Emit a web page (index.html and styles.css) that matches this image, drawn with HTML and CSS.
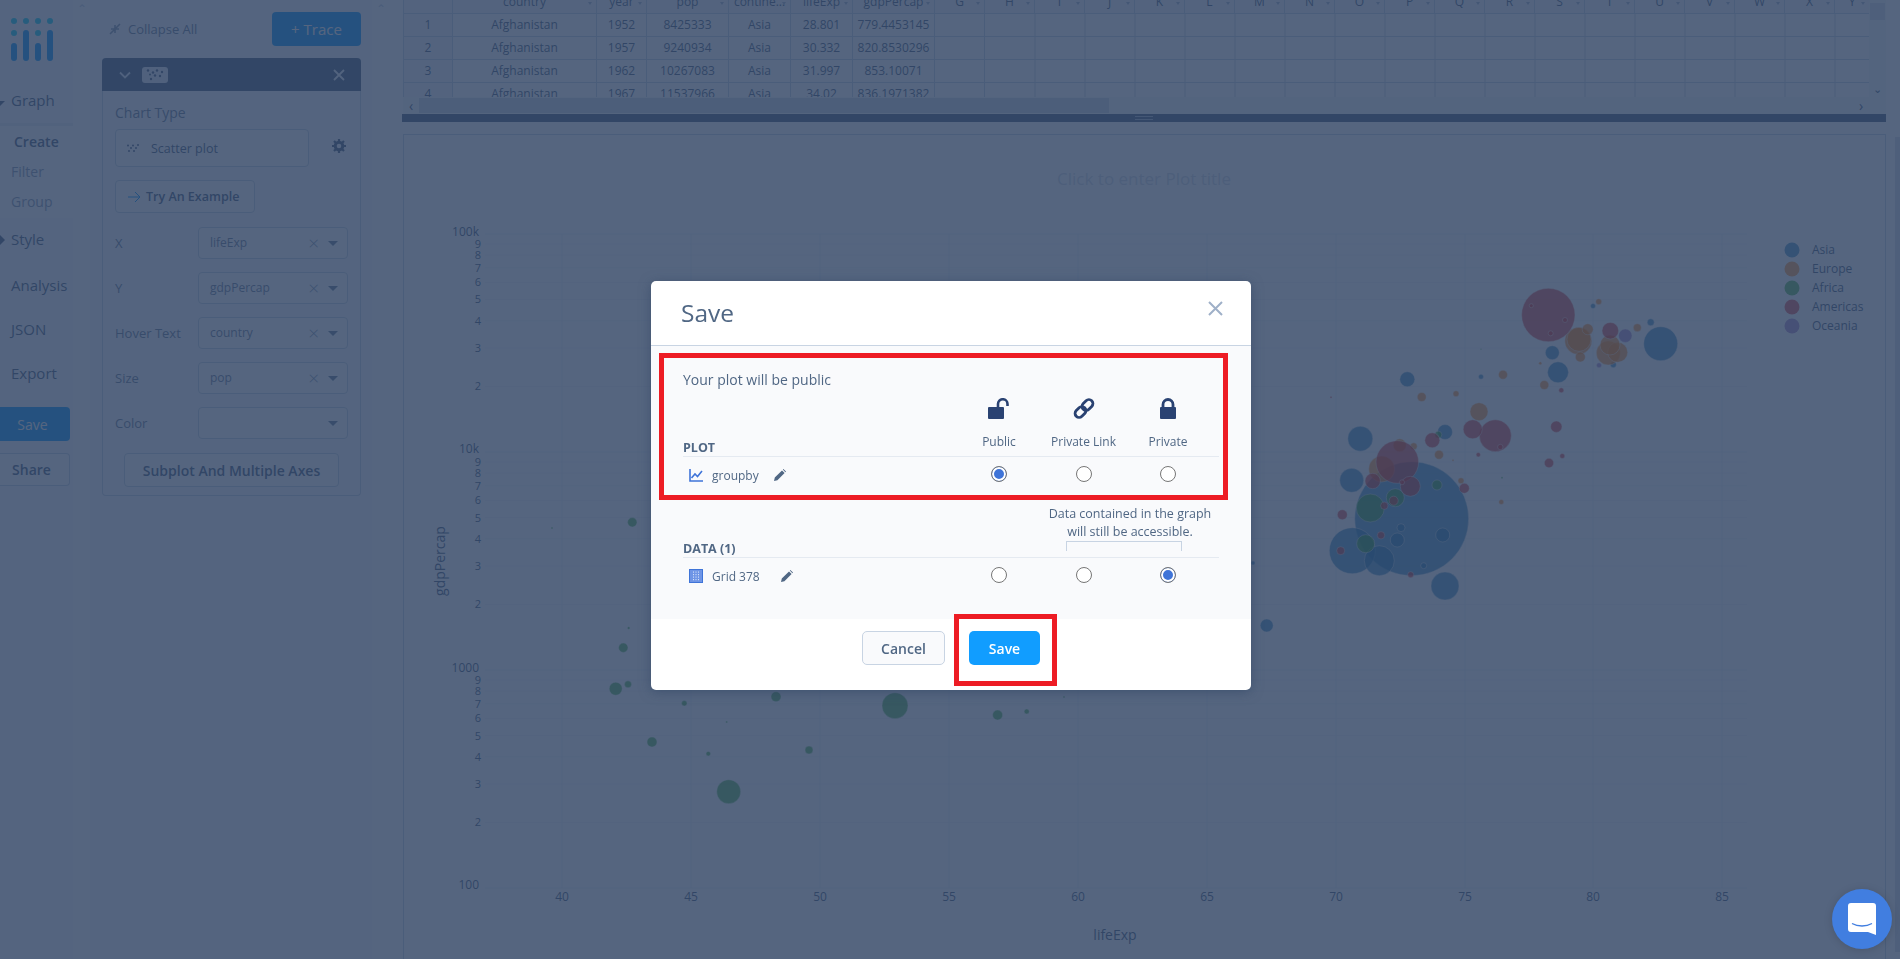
FILE: index.html
```html
<!DOCTYPE html>
<html lang="en">
  <head>
    <meta charset="UTF-8">
    <title>Chart Studio - Save</title>
    <link rel="stylesheet" href="styles.css">
  </head>
  <body>
    <div class="app">
      <nav class="nav">
        <svg class="logo" width="48" height="46" viewBox="0 0 48 46">
          <g fill="#19d3f3">
            <circle cx="4" cy="4" r="3"/><circle cx="16" cy="4" r="3"/><circle cx="28" cy="4" r="3"/><circle cx="40" cy="4" r="3"/>
            <circle cx="4" cy="16" r="3"/><circle cx="28" cy="16" r="3"/>
          </g>
          <g fill="#119dff">
            <rect x="1" y="26" width="6" height="18" rx="3"/><rect x="13" y="13" width="6" height="31" rx="3"/>
            <rect x="25" y="26" width="6" height="18" rx="3"/><rect x="37" y="13" width="6" height="31" rx="3"/>
          </g>
        </svg>
        <div class="nav-item nav-graph"><span class="caret-down"></span>Graph</div>
        <div class="nav-sub">
          <div class="nav-sub-item active">Create</div>
          <div class="nav-sub-item">Filter</div>
          <div class="nav-sub-item">Group</div>
        </div>
        <div class="nav-item nav-style"><span class="caret-right"></span>Style</div>
        <div class="nav-item nav-analysis">Analysis</div>
        <div class="nav-item">JSON</div>
        <div class="nav-item">Export</div>
        <button class="nav-save">Save</button>
        <button class="nav-share">Share</button>
      </nav>

      <aside class="panel-col">
        <div class="panel-band"><span class="band-arrow">&#8963;</span></div>
        <div class="panel-main">
          <div class="panel-top">
            <div class="collapse-all">
              <svg width="12" height="12" viewBox="0 0 12 12"><path d="M1 11 5 7M7 5l4-4M2 6h4v4M6 2v4h4" fill="none" stroke="#8c9db3" stroke-width="1.6"/></svg>
              Collapse All
            </div>
            <button class="btn-trace">+ Trace</button>
          </div>
          <div class="fold">
            <div class="fold-head">
              <svg class="fold-chevron" width="12" height="8" viewBox="0 0 12 8"><path d="M1 1.5 6 6.5 11 1.5" fill="none" stroke="#dfe8f3" stroke-width="1.8"/></svg>
              <svg class="fold-pill" width="26" height="16" viewBox="0 0 26 16">
                <rect width="26" height="16" rx="3" fill="#e4ebf4"/>
                <g fill="#506784"><circle cx="6" cy="3.5" r="1.2"/><circle cx="11" cy="5.5" r="1.2"/><circle cx="15" cy="3.5" r="1.2"/><circle cx="20" cy="5" r="1.2"/><circle cx="13" cy="8.5" r="1.2"/><circle cx="18" cy="9" r="1.2"/><circle cx="9" cy="12" r="1.2"/><circle cx="8" cy="7.5" r="1"/></g>
              </svg>
              <svg class="fold-close" width="12" height="12" viewBox="0 0 12 12"><path d="M1 1 11 11M11 1 1 11" stroke="#eef2f7" stroke-width="1.8"/></svg>
            </div>
            <div class="fold-body">
              <div class="field-title">Chart Type</div>
              <div class="type-row">
                <div class="type-box">
                  <svg width="13" height="9" viewBox="0 0 13 9"><g fill="#506784"><circle cx="1" cy="1.5" r="1"/><circle cx="6" cy="1.5" r="1"/><circle cx="11" cy="1" r="1"/><circle cx="4" cy="4" r="1"/><circle cx="9" cy="4" r="1"/><circle cx="2" cy="7" r="1"/><circle cx="7" cy="7" r="1"/></g></svg>
                  Scatter plot
                </div>
                <svg class="gear" width="14" height="14" viewBox="0 0 14 14"><circle cx="7" cy="7" r="3.8" fill="none" stroke="#506784" stroke-width="3"/><path d="M7 0v3M7 11v3M0 7h3M11 7h3M2 2l2 2M10 10l2 2M12 2l-2 2M4 10l-2 2" stroke="#506784" stroke-width="2.2"/></svg>
              </div>
              <button class="btn-example">
                <svg width="13" height="12" viewBox="0 0 13 12"><path d="M0 6h12M7 1l5 5-5 5" fill="none" stroke="#119dff" stroke-width="1"/></svg>
                Try An Example
              </button>
              <div class="field-row">
                <span class="field-label">X</span>
                <div class="select"><span class="select-value">lifeExp</span><span class="select-clear">&times;</span><span class="select-caret"></span></div>
              </div>
              <div class="field-row">
                <span class="field-label">Y</span>
                <div class="select"><span class="select-value">gdpPercap</span><span class="select-clear">&times;</span><span class="select-caret"></span></div>
              </div>
              <div class="field-row">
                <span class="field-label">Hover Text</span>
                <div class="select"><span class="select-value">country</span><span class="select-clear">&times;</span><span class="select-caret"></span></div>
              </div>
              <div class="field-row">
                <span class="field-label">Size</span>
                <div class="select"><span class="select-value">pop</span><span class="select-clear">&times;</span><span class="select-caret"></span></div>
              </div>
              <div class="field-row">
                <span class="field-label">Color</span>
                <div class="select"><span class="select-value"></span><span class="select-caret"></span></div>
              </div>
              <button class="btn-subplot">Subplot And Multiple Axes</button>
            </div>
          </div>
        </div>
        <div class="panel-band panel-band-right"><span class="band-arrow">&#8963;</span></div>
      </aside>

      <main class="main">
        <div class="sheet">
          <div class="sheet-cells">
            <table class="grid">
              <colgroup>
                <col class="w-index"><col class="w-country"><col class="w-year"><col class="w-pop"><col class="w-mid"><col class="w-mid"><col class="w-pop"><col class="w-year">
                <col class="w-year"><col class="w-year"><col class="w-year"><col class="w-year"><col class="w-year"><col class="w-year"><col class="w-year"><col class="w-year"><col class="w-year"><col class="w-year"><col class="w-year"><col class="w-year"><col class="w-year"><col class="w-year"><col class="w-year"><col class="w-year"><col class="w-year"><col class="w-last">
              </colgroup>
              <thead>
                <tr>
                  <th class="corner"></th><th>country</th><th>year</th><th>pop</th><th>contine...</th><th>lifeExp</th><th>gdpPercap</th><th>G</th>
                  <th>H</th><th>I</th><th>J</th><th>K</th><th>L</th><th>M</th><th>N</th><th>O</th><th>P</th><th>Q</th><th>R</th><th>S</th><th>T</th><th>U</th><th>V</th><th>W</th><th>X</th><th>Y</th>
                </tr>
              </thead>
              <tbody>
                <tr><td class="row-no">1</td><td>Afghanistan</td><td>1952</td><td>8425333</td><td>Asia</td><td>28.801</td><td>779.4453145</td><td></td><td class="blank" colspan="18"></td></tr>
                <tr><td class="row-no">2</td><td>Afghanistan</td><td>1957</td><td>9240934</td><td>Asia</td><td>30.332</td><td>820.8530296</td><td></td><td class="blank" colspan="18"></td></tr>
                <tr><td class="row-no">3</td><td>Afghanistan</td><td>1962</td><td>10267083</td><td>Asia</td><td>31.997</td><td>853.10071</td><td></td><td class="blank" colspan="18"></td></tr>
                <tr><td class="row-no">4</td><td>Afghanistan</td><td>1967</td><td>11537966</td><td>Asia</td><td>34.02</td><td>836.1971382</td><td></td><td class="blank" colspan="18"></td></tr>
              </tbody>
            </table>
          </div>
          <div class="sheet-vbar"><span class="vbar-thumb"></span><span class="vbar-arrow">&#8964;</span></div>
        </div>
        <div class="sheet-hbar">
          <span class="hbar-arrow">&lsaquo;</span>
          <span class="hbar-thumb"></span>
          <span class="hbar-arrow hbar-arrow-right">&rsaquo;</span>
        </div>
        <div class="divider"><span class="divider-grip"></span></div>

        <div class="plot">
          <svg class="plot-svg" width="1483" height="824" viewBox="403 135 1483 824">
            <path class="grid-minor" d="M485 822.4H1747M485 784H1747M485 756.8H1747M485 735.6H1747M485 718.4H1747M485 703.8H1747M485 691.1H1747M485 680H1747M485 604.4H1747M485 566H1747M485 538.8H1747M485 517.6H1747M485 500.4H1747M485 485.8H1747M485 473.1H1747M485 462H1747M485 386.4H1747M485 348H1747M485 320.8H1747M485 299.6H1747M485 282.4H1747M485 267.8H1747M485 255.1H1747M485 244H1747"/>
            <path class="grid-major" d="M485 888H1747M485 670H1747M485 452H1747M485 234H1747M562 234V888M691 234V888M820 234V888M949 234V888M1078 234V888M1207 234V888M1336 234V888M1465 234V888M1593 234V888M1722 234V888"/>

            <text class="plot-title" x="1144" y="185" text-anchor="middle">Click to enter Plot title</text>

            <g class="tick-major" text-anchor="end">
              <text x="479" y="236">100k</text><text x="479" y="453">10k</text><text x="479" y="672">1000</text><text x="479" y="889">100</text>
            </g>
            <g class="tick-minor" text-anchor="end">
              <text x="481" y="248">9</text><text x="481" y="259">8</text><text x="481" y="272">7</text><text x="481" y="286">6</text><text x="481" y="303">5</text><text x="481" y="325">4</text><text x="481" y="352">3</text><text x="481" y="390">2</text>
              <text x="481" y="466">9</text><text x="481" y="477">8</text><text x="481" y="490">7</text><text x="481" y="504">6</text><text x="481" y="522">5</text><text x="481" y="543">4</text><text x="481" y="570">3</text><text x="481" y="608">2</text>
              <text x="481" y="684">9</text><text x="481" y="695">8</text><text x="481" y="708">7</text><text x="481" y="722">6</text><text x="481" y="740">5</text><text x="481" y="761">4</text><text x="481" y="788">3</text><text x="481" y="826">2</text>
            </g>
            <g class="tick-major" text-anchor="middle">
              <text x="562" y="901">40</text><text x="691" y="901">45</text><text x="820" y="901">50</text><text x="949" y="901">55</text><text x="1078" y="901">60</text><text x="1207" y="901">65</text><text x="1336" y="901">70</text><text x="1465" y="901">75</text><text x="1593" y="901">80</text><text x="1722" y="901">85</text>
            </g>
            <text class="axis-title" x="1115" y="940" text-anchor="middle">lifeExp</text>
            <text class="axis-title" x="445" y="561" text-anchor="middle" transform="rotate(-90 445 561)">gdpPercap</text>

            <g class="bubbles asia">
              <circle cx="1411.7" cy="518.7" r="57"/><circle cx="1660.7" cy="343.7" r="17"/><circle cx="1558" cy="372.3" r="10.5"/><circle cx="1552.3" cy="352.7" r="7"/><circle cx="1407.3" cy="379.3" r="7.5"/><circle cx="1445" cy="432" r="7.5"/><circle cx="1360.3" cy="438.7" r="12.5"/><circle cx="1351.7" cy="480.3" r="12"/><circle cx="1352.3" cy="550.7" r="23"/><circle cx="1379.3" cy="560.7" r="15"/><circle cx="1445" cy="586" r="14"/><circle cx="1397.3" cy="540" r="7"/><circle cx="1442.7" cy="535" r="7"/><circle cx="1401" cy="527.7" r="4"/><circle cx="1423.7" cy="565.7" r="3"/><circle cx="1481" cy="376.7" r="2.5"/><circle cx="1650.7" cy="322.3" r="3.5"/><circle cx="1593" cy="306" r="2.5"/><circle cx="1613.3" cy="364.7" r="3"/><circle cx="1266.7" cy="625.5" r="6.5"/><circle cx="1253" cy="563" r="2"/>
            </g>
            <g class="bubbles europe">
              <circle cx="1578.3" cy="341" r="13.5"/><circle cx="1579" cy="339.3" r="12"/><circle cx="1587.7" cy="329.3" r="5.5"/><circle cx="1580.3" cy="357" r="5"/><circle cx="1598.7" cy="301.7" r="3"/><circle cx="1637.3" cy="327.7" r="4"/><circle cx="1608.3" cy="353" r="12"/><circle cx="1617.7" cy="352.3" r="10"/><circle cx="1610" cy="345" r="10"/><circle cx="1540.3" cy="363.3" r="1.5"/><circle cx="1544.3" cy="385" r="4.5"/><circle cx="1503" cy="374.7" r="4.5"/><circle cx="1456" cy="393.7" r="3"/><circle cx="1421.7" cy="397" r="4.5"/><circle cx="1479" cy="411.7" r="9"/><circle cx="1439" cy="454.7" r="4.5"/><circle cx="1381.7" cy="469" r="13"/><circle cx="1399.7" cy="445.3" r="6.5"/><circle cx="1413.7" cy="446.3" r="3.5"/><circle cx="1461" cy="480.7" r="3"/><circle cx="1501.3" cy="502" r="2.5"/><circle cx="1453" cy="460.3" r="1"/>
            </g>
            <g class="bubbles africa">
              <circle cx="1370.3" cy="508" r="14"/><circle cx="1395.3" cy="497.7" r="9"/><circle cx="1437" cy="485" r="5"/><circle cx="1365.7" cy="543.7" r="9"/><circle cx="1438.3" cy="434.7" r="3.5"/><circle cx="1502" cy="477.7" r="1"/><circle cx="1481" cy="349.3" r="0.7"/><circle cx="632.3" cy="522.3" r="4.7"/><circle cx="552" cy="528" r="1"/><circle cx="628.7" cy="628" r="1.3"/><circle cx="623.3" cy="647.7" r="4.7"/><circle cx="615.7" cy="688.7" r="6.5"/><circle cx="628" cy="684.3" r="3.5"/><circle cx="684.3" cy="703.3" r="2.7"/><circle cx="726.7" cy="722" r="1"/><circle cx="652" cy="742" r="5"/><circle cx="708.3" cy="753.7" r="2.3"/><circle cx="809" cy="750" r="4"/><circle cx="728.7" cy="791.7" r="12"/><circle cx="776" cy="696.7" r="5"/><circle cx="895" cy="705.7" r="13"/><circle cx="997.6" cy="715" r="5"/><circle cx="1026.7" cy="711.5" r="2.5"/><circle cx="1064" cy="697" r="1"/>
            </g>
            <g class="bubbles americas">
              <circle cx="1548.3" cy="315" r="26.7"/><circle cx="1610.3" cy="330.7" r="8.3"/><circle cx="1561.3" cy="390.3" r="2.5"/><circle cx="1495.3" cy="435.7" r="16"/><circle cx="1472.7" cy="429.3" r="9.5"/><circle cx="1556.3" cy="426.7" r="5.7"/><circle cx="1432.3" cy="440.3" r="7.5"/><circle cx="1562.3" cy="456" r="2.5"/><circle cx="1549" cy="463" r="4.7"/><circle cx="1478.3" cy="454.7" r="2.2"/><circle cx="1397.3" cy="462" r="21.3"/><circle cx="1372.7" cy="481" r="7.7"/><circle cx="1410.3" cy="486.3" r="10"/><circle cx="1464.3" cy="488.3" r="5"/><circle cx="1402" cy="482.3" r="2.5"/><circle cx="1393.7" cy="500.7" r="4.5"/><circle cx="1384.3" cy="505.7" r="3.7"/><circle cx="1342.3" cy="514.7" r="5"/><circle cx="1381" cy="535.3" r="3.7"/><circle cx="1340.7" cy="550.7" r="4"/><circle cx="1410.7" cy="574.7" r="3"/><circle cx="1500.3" cy="447" r="2.7"/><circle cx="1331" cy="397.3" r="1"/><circle cx="1531.3" cy="305.7" r="2"/><circle cx="1565" cy="320" r="2.5"/><circle cx="1550.7" cy="333.3" r="2.5"/>
            </g>
            <g class="bubbles oceania">
              <circle cx="1625.3" cy="335.7" r="6.7"/><circle cx="1599" cy="365.3" r="2.5"/>
            </g>

            <g class="legend">
              <circle class="asia" cx="1792" cy="250" r="7.5"/><text x="1812" y="254">Asia</text>
              <circle class="europe" cx="1792" cy="269" r="7.5"/><text x="1812" y="273">Europe</text>
              <circle class="africa" cx="1792" cy="288" r="7.5"/><text x="1812" y="292">Africa</text>
              <circle class="americas" cx="1792" cy="307" r="7.5"/><text x="1812" y="311">Americas</text>
              <circle class="oceania" cx="1792" cy="326" r="7.5"/><text x="1812" y="330">Oceania</text>
            </g>
          </svg>
        </div>
      </main>

      <div class="page-scroll"><span class="page-thumb"></span></div>
    </div>

    <div class="overlay">
      <div class="modal">
        <div class="modal-head">
          <h2 class="modal-title">Save</h2>
          <svg class="modal-close" width="15" height="15" viewBox="0 0 15 15"><path d="M1 1 14 14M14 1 1 14" stroke="#9fb0c8" stroke-width="2"/></svg>
        </div>
        <div class="modal-body">
          <p class="modal-hint">Your plot will be public</p>

          <div class="share-head">
            <div class="share-name">PLOT</div>
            <div class="share-col">
              <svg width="22" height="21" viewBox="0 0 22 21"><path d="M10 9V6a4.5 4.5 0 0 1 9.5 0v2" fill="none" stroke="#2a4272" stroke-width="2.6"/><rect x="0" y="9" width="16" height="12" rx="1" fill="#2a4272"/></svg>
              <span>Public</span>
            </div>
            <div class="share-col">
              <svg width="22" height="21" viewBox="0 0 22 21"><g fill="none" stroke="#2a4272" stroke-width="2.8"><rect x="1.5" y="10" width="12" height="8" rx="4" transform="rotate(-45 7.5 14)"/><rect x="8.5" y="3" width="12" height="8" rx="4" transform="rotate(-45 14.5 7)"/></g></svg>
              <span>Private Link</span>
            </div>
            <div class="share-col">
              <svg width="22" height="21" viewBox="0 0 22 21"><path d="M6 10V6.5a5 5 0 0 1 10 0V10" fill="none" stroke="#2a4272" stroke-width="2.8"/><rect x="3" y="9" width="16" height="12" rx="1" fill="#2a4272"/></svg>
              <span>Private</span>
            </div>
          </div>
          <div class="share-row">
            <div class="share-name-cell">
              <svg class="file-icon" width="14" height="13" viewBox="0 0 14 13"><path d="M1 0v12h13" fill="none" stroke="#3f74d8" stroke-width="1.6"/><path d="M2.5 9 6 5l2.500 2.500L13 2" fill="none" stroke="#3f74d8" stroke-width="1.6"/></svg>
              <span class="file-name">groupby</span>
              <svg class="pencil" width="12" height="12" viewBox="0 0 12 12"><path d="M0 12l.8-3.400L8 1.400 10.600 4 3.400 11.200zM8.800.6 9.400 0 12 2.600l-.6.6z" fill="#506784"/></svg>
            </div>
            <div class="share-radio"><input type="radio" name="plot" checked></div>
            <div class="share-radio"><input type="radio" name="plot"></div>
            <div class="share-radio"><input type="radio" name="plot"></div>
          </div>

          <div class="data-head">
            <div class="data-name">DATA (1)</div>
            <div class="data-note">
              <p>Data contained in the graph<br>will still be accessible.</p>
              <div class="data-bracket"></div>
            </div>
          </div>
          <div class="share-row">
            <div class="share-name-cell">
              <svg class="file-icon" width="14" height="14" viewBox="0 0 14 14"><rect width="14" height="14" fill="#3f74d8"/><rect x="1" y="1" width="12" height="12" fill="#6f95e6"/><path d="M4.5 2.500v9M7 2.500v9M9.500 2.500v9" stroke="#dfe8fb" stroke-width=".9" stroke-dasharray="1.200 1.300"/></svg>
              <span class="file-name">Grid 378</span>
              <svg class="pencil pencil-data" width="12" height="12" viewBox="0 0 12 12"><path d="M0 12l.8-3.400L8 1.400 10.600 4 3.400 11.200zM8.800.6 9.400 0 12 2.600l-.6.6z" fill="#506784"/></svg>
            </div>
            <div class="share-radio"><input type="radio" name="data"></div>
            <div class="share-radio"><input type="radio" name="data"></div>
            <div class="share-radio"><input type="radio" name="data" checked></div>
          </div>
        </div>
        <div class="modal-foot">
          <button class="btn-cancel">Cancel</button>
          <button class="btn-save">Save</button>
        </div>
        <div class="mark mark-plot"></div>
        <div class="mark mark-save"></div>
      </div>
    </div>

    <div class="chat-bubble">
      <svg width="28" height="32" viewBox="0 0 28 32">
        <path d="M3 0h22a3 3 0 0 1 3 3v29l-8-3H3a3 3 0 0 1-3-3V3a3 3 0 0 1 3-3z" fill="#fff"/>
        <path d="M4 20.5c6 3.300 14 3.300 20 0" fill="none" stroke="#417ee0" stroke-width="1.4"/>
      </svg>
    </div>
  </body>
</html>
```

FILE: styles.css
```css
* {
  box-sizing: border-box;
  margin: 0;
  padding: 0;
}

body {
  width: 1900px;
  height: 959px;
  overflow: hidden;
  font-family: "Open Sans", "Noto Sans", sans-serif;
  font-size: 13px;
  color: #506784;
  background: #fff;
}

button {
  font-family: inherit;
  cursor: pointer;
}

.app {
  display: flex;
  height: 959px;
}

/* left nav */
.nav {
  width: 73px;
  flex: none;
  background: #fafbfd;
}

.logo {
  display: block;
  margin: 17px 0 0 10px;
}

.nav-item {
  font-size: 15px;
  line-height: 20px;
  margin-top: 24px;
  padding-left: 11px;
  position: relative;
}

.nav-graph {
  margin-top: 27px;
}

.nav-style {
  margin-top: 11px;
}

.nav-analysis {
  margin-top: 26px;
}

.caret-down {
  position: absolute;
  left: 0;
  top: 11px;
  border-left: 5px solid transparent;
  border-right: 5px solid transparent;
  border-top: 5px solid #506784;
  margin-left: -5px;
}

.caret-right {
  position: absolute;
  left: 0;
  top: 6px;
  border-top: 5px solid transparent;
  border-bottom: 5px solid transparent;
  border-left: 5px solid #506784;
}

.nav-sub {
  margin-top: 13px;
  padding: 9px 0 6px;
  background: #fff;
  box-shadow: inset 0 3px 0 #e9edf3;
}

.nav-sub-item {
  font-size: 14px;
  line-height: 20px;
  padding-left: 11px;
  color: #8c9db3;
  margin-bottom: 10px;
}

.nav-sub-item:last-child {
  margin-bottom: 0;
}

.nav-sub-item.active {
  color: #506784;
  font-weight: 600;
  padding-left: 14px;
}

.nav-save {
  display: block;
  width: 70px;
  height: 34px;
  margin-top: 24px;
  padding-right: 5px;
  border: none;
  border-radius: 0 4px 4px 0;
  background: #119dff;
  color: #fff;
  font-size: 14px;
}

.nav-share {
  display: block;
  width: 70px;
  height: 33px;
  margin-top: 12px;
  padding-right: 6px;
  background: #fff;
  border: 1px solid #c8d4e3;
  border-left: none;
  border-radius: 0 4px 4px 0;
  color: #506784;
  font-size: 14px;
  font-weight: 600;
}

/* trace panel */
.panel-col {
  display: flex;
  width: 317px;
  flex: none;
  background: #fff;
}

.panel-band {
  width: 17px;
  flex: none;
  text-align: center;
  line-height: 16px;
  color: #c8d4e3;
}

.panel-band-right {
  width: 18px;
}

.band-arrow {
  font-size: 12px;
}

.panel-main {
  width: 282px;
  flex: none;
  padding: 12px 11px 0 12px;
  background: #fafbfd;
}

.panel-top {
  display: flex;
  align-items: center;
  justify-content: space-between;
  height: 34px;
}

.collapse-all {
  display: flex;
  align-items: center;
  gap: 7px;
  margin-left: 7px;
  font-size: 13px;
  color: #6f829c;
}

.btn-trace {
  width: 89px;
  height: 34px;
  background: #119dff;
  border: none;
  border-radius: 4px;
  color: #fff;
  font-size: 15px;
}

.fold {
  margin-top: 12px;
  border: 1px solid #c8d4e3;
  border-top: none;
  border-radius: 4px;
}

.fold-head {
  display: flex;
  align-items: center;
  height: 33px;
  margin: 0 -1px;
  padding: 0 16px 0 17px;
  background: #506784;
  border-radius: 4px 4px 0 0;
}

.fold-pill {
  margin-left: 11px;
}

.fold-close {
  margin-left: auto;
}

.fold-body {
  padding: 12px 12px 8px;
}

.field-title {
  font-size: 14px;
  line-height: 20px;
  color: #6f829c;
}

.type-row {
  display: flex;
  align-items: center;
  margin-top: 6px;
}

.type-box {
  display: flex;
  align-items: center;
  gap: 11px;
  width: 194px;
  height: 38px;
  padding-left: 11px;
  background: #fff;
  border: 1px solid #c8d4e3;
  border-radius: 4px;
  font-size: 12.5px;
}

.gear {
  margin: -4px 0 0 23px;
}

.btn-example {
  display: flex;
  align-items: center;
  gap: 5px;
  width: 140px;
  height: 33px;
  margin-top: 13px;
  padding-left: 12px;
  background: #fff;
  border: 1px solid #c8d4e3;
  border-radius: 4px;
  color: #506784;
  font-size: 12.5px;
  font-weight: 600;
}

.field-row {
  display: flex;
  align-items: center;
  height: 32px;
  margin-top: 13px;
}

.btn-example + .field-row {
  margin-top: 14px;
}

.field-label {
  width: 83px;
  flex: none;
  font-size: 13px;
  color: #6f829c;
}

.select {
  display: flex;
  align-items: center;
  width: 150px;
  height: 32px;
  padding: 0 9px 0 11px;
  background: #fff;
  border: 1px solid #c8d4e3;
  border-radius: 4px;
}

.select-value {
  flex: 1;
  margin-top: -2px;
  font-size: 12px;
  color: #6f829c;
}

.select-clear {
  margin-right: 9px;
  font-size: 19px;
  font-weight: 300;
  line-height: 1;
  color: #8c9db3;
}

.select-caret {
  border-left: 5px solid transparent;
  border-right: 5px solid transparent;
  border-top: 5px solid #6f829c;
}

.btn-subplot {
  display: block;
  width: 215px;
  height: 34px;
  margin: 14px 0 0 9px;
  background: #fff;
  border: 1px solid #c8d4e3;
  border-radius: 4px;
  color: #506784;
  font-size: 14px;
  font-weight: 600;
}

/* grid and plot */
.main {
  width: 1484px;
  margin-left: 12px;
  flex: none;
}

.sheet {
  display: flex;
  height: 97px;
  margin-left: 1px;
  overflow: hidden;
}

.sheet-cells {
  width: 1466px;
  flex: none;
  overflow: hidden;
}

.grid {
  table-layout: fixed;
  width: 1466px;
  margin-top: -10px;
  border-collapse: collapse;
  font-size: 12px;
  text-align: center;
}

.w-index { width: 49px; }
.w-country { width: 144px; }
.w-year { width: 50px; }
.w-pop { width: 82px; }
.w-mid { width: 62px; }
.w-last { width: 35px; }

.grid th,
.grid td {
  height: 23px;
  padding: 0 0 2px;
  font-weight: 400;
  white-space: nowrap;
  overflow: hidden;
  border: 1px solid #c8d4e3;
}

.grid th {
  position: relative;
  background: #f3f6fa;
}

/* sort marker in each header cell */
.grid th::after {
  content: "";
  position: absolute;
  right: 4px;
  bottom: 8px;
  border-left: 2.5px solid transparent;
  border-right: 2.5px solid transparent;
  border-top: 3px solid #a9b8cc;
}

.grid th.corner::after {
  display: none;
}

.grid .row-no {
  background: #f3f6fa;
}

.grid .blank {
  border-left: none;
  background: repeating-linear-gradient(to right, transparent 0 49px, #c8d4e3 49px 50px);
}

.sheet-vbar {
  position: relative;
  width: 17px;
  flex: none;
  background: #f6f8fb;
}

.vbar-thumb {
  display: block;
  width: 15px;
  height: 17px;
  margin: 3px 0 0 1px;
  background: #d9e1ea;
}

.vbar-arrow {
  position: absolute;
  left: 4px;
  bottom: 3px;
  font-size: 11px;
  line-height: 1;
}

.sheet-hbar {
  display: flex;
  align-items: center;
  height: 17px;
  margin-left: 1px;
  background: #f6f8fb;
}

.hbar-arrow {
  width: 16px;
  text-align: center;
  font-size: 14px;
  line-height: 1;
}

.hbar-arrow-right {
  margin-left: auto;
  margin-right: 17px;
}

.hbar-thumb {
  width: 690px;
  height: 15px;
  background: #d2dae5;
}

.divider {
  display: flex;
  justify-content: center;
  align-items: center;
  height: 8px;
  background: #506784;
}

.divider-grip {
  width: 18px;
  height: 4px;
  border-top: 1px solid #a9b8cc;
  border-bottom: 1px solid #a9b8cc;
}

.plot {
  height: 837px;
  margin: 12px 0 0 1px;
  background: #fff;
  border: 1px solid #c8d4e3;
  border-bottom: none;
}

.plot-svg {
  display: block;
  margin: 0 -1px;
}

.grid-minor {
  fill: none;
  stroke: #f1f4f9;
  stroke-width: 1;
}

.grid-major {
  fill: none;
  stroke: #ebf0f8;
  stroke-width: 1;
}

.plot-title {
  font-size: 17px;
  fill: #d5dce6;
}

.tick-major text {
  font-size: 12px;
  fill: #506784;
}

.tick-minor text {
  font-size: 11px;
  fill: #506784;
}

.axis-title {
  font-size: 14px;
  fill: #506784;
}

.bubbles circle {
  fill-opacity: 0.7;
  stroke: #fff;
  stroke-width: 0.7;
  stroke-opacity: 0.6;
}

.bubbles.asia circle { fill: #1f77b4; }
.bubbles.europe circle { fill: #ff7f0e; }
.bubbles.africa circle { fill: #2ca02c; }
.bubbles.americas circle { fill: #d62728; }
.bubbles.oceania circle { fill: #9467bd; }

.legend text {
  font-size: 12px;
  fill: #506784;
}

.legend circle { fill-opacity: 0.7; }
.legend .asia { fill: #1f77b4; }
.legend .europe { fill: #ff7f0e; }
.legend .africa { fill: #2ca02c; }
.legend .americas { fill: #d62728; }
.legend .oceania { fill: #9467bd; }

.page-scroll {
  flex: 1;
  padding: 137px 0 7px 9px;
}

.page-thumb {
  display: block;
  height: 100%;
  background: #dbe2ea;
}

/* save dialog */
.overlay {
  position: fixed;
  inset: 0;
  display: flex;
  align-items: center;
  justify-content: center;
  background: rgba(42, 63, 95, 0.8);
}

.modal {
  position: relative;
  width: 600px;
  height: 409px;
  margin: 12px 0 0 2px;
  background: #fff;
  border-radius: 5px;
  box-shadow: 0 2px 12px rgba(42, 63, 95, 0.5);
  overflow: hidden;
}

.modal-head {
  display: flex;
  align-items: center;
  justify-content: space-between;
  height: 65px;
  padding: 0 28px 8px 30px;
  border-bottom: 1px solid #c8d4e3;
}

.modal-title {
  font-size: 24.5px;
  font-weight: 400;
  line-height: 34px;
  margin-top: 8px;
}

.modal-close {
  margin-top: -2px;
}

.modal-body {
  height: 273px;
  padding: 24px 32px 0;
  background: #f9fafc;
}

.modal-hint {
  font-size: 14px;
  line-height: 20px;
}

.share-head {
  display: grid;
  grid-template-columns: 274px 84px 85px 84px;
  margin-top: 8px;
  padding-bottom: 5px;
  border-bottom: 1px solid #e5eaf1;
}

.share-name,
.data-name {
  align-self: end;
  font-size: 12.5px;
  font-weight: 700;
  line-height: 16px;
}

.share-name {
  margin-bottom: -5px;
}

.share-col {
  display: flex;
  flex-direction: column;
  align-items: center;
  font-size: 12px;
  line-height: 18px;
}

.share-col svg {
  display: block;
  margin-bottom: 14px;
}

.share-row {
  display: grid;
  grid-template-columns: 274px 84px 85px 84px;
  align-items: center;
  height: 36px;
}

.share-name-cell {
  display: flex;
  align-items: center;
  padding-left: 6px;
}

.file-icon {
  flex: none;
}

.file-name {
  width: 62px;
  margin-left: 9px;
  font-size: 12px;
}

.pencil-data {
  margin-left: 7px;
}

.share-radio {
  display: flex;
  justify-content: center;
  margin-top: -2px;
}

.share-radio input {
  appearance: none;
  display: block;
  width: 16px;
  height: 16px;
  margin: 0;
  background: #fff;
  border: 1px solid #767676;
  border-radius: 50%;
}

.share-radio input:checked {
  background: #3f74d8;
  box-shadow: inset 0 0 0 2px #fff;
}

.data-head {
  display: flex;
  align-items: flex-end;
  justify-content: space-between;
  margin-top: 12px;
  border-bottom: 1px solid #e5eaf1;
}

.data-note {
  width: 178px;
  padding-bottom: 6px;
  font-size: 12.5px;
  line-height: 18px;
  text-align: center;
}

.data-bracket {
  width: 116px;
  height: 10px;
  margin-left: 25px;
  border: 1px solid #c8d4e3;
  border-bottom: none;
}

.modal-foot {
  display: flex;
  justify-content: center;
  gap: 24px;
  padding-top: 12px;
}

.btn-cancel {
  width: 83px;
  height: 34px;
  background: #f9fafc;
  border: 1px solid #c8d4e3;
  border-radius: 5px;
  color: #506784;
  font-size: 14px;
  font-weight: 600;
}

.btn-save {
  width: 71px;
  height: 34px;
  background: #119dff;
  border: none;
  border-radius: 5px;
  color: #fff;
  font-size: 14px;
  font-weight: 600;
}

/* red annotation boxes drawn on the screenshot */
.mark {
  position: absolute;
  border: 5px solid #ed1c24;
}

.mark-plot {
  left: 8px;
  top: 72px;
  width: 569px;
  height: 147px;
}

.mark-save {
  left: 303px;
  top: 333px;
  width: 103px;
  height: 72px;
}

.chat-bubble {
  position: fixed;
  right: 8px;
  bottom: 10px;
  display: flex;
  align-items: center;
  justify-content: center;
  width: 60px;
  height: 60px;
  background: #417ee0;
  border-radius: 50%;
  box-shadow: 0 1px 8px rgba(0, 0, 0, 0.15);
}
```
